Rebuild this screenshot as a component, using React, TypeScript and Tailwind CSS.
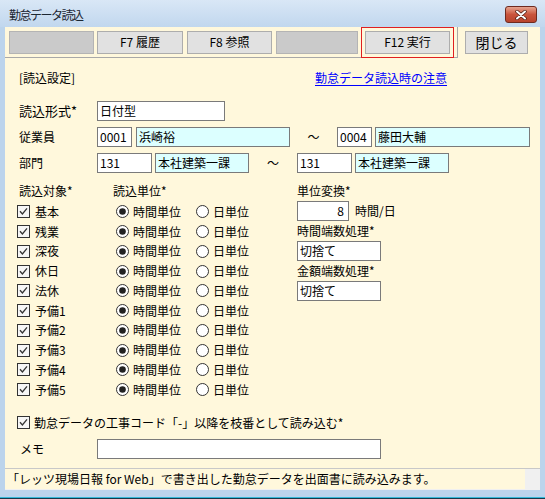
import React from "react";

const rows = ["基本", "残業", "深夜", "休日", "法休", "予備1", "予備2", "予備3", "予備4", "予備5"];

function Check() {
  return (
    <svg width="13" height="13" viewBox="0 0 13 13" className="shrink-0">
      <rect x="0.5" y="0.5" width="12" height="12" fill="#f6f6f6" stroke="#333333" />
      <path d="M3 6.3 L5.4 8.9 L10 3.4" fill="none" stroke="#333333" strokeWidth="1.3" />
    </svg>
  );
}

function Radio({ on }: { on?: boolean }) {
  return (
    <svg width="13" height="13" viewBox="0 0 13 13" className="shrink-0">
      <circle cx="6.5" cy="6.5" r="6" fill="#ffffff" stroke="#333333" />
      {on && <circle cx="6.5" cy="6.5" r="3.3" fill="#222222" />}
    </svg>
  );
}

function Field({ w, value, cyan, right }: { w: string; value?: string; cyan?: boolean; right?: boolean }) {
  return (
    <div
      className={`${w} h-[20px] shrink-0 border border-[#7a7a7a] px-[2px] flex items-center leading-none ${
        cyan ? "bg-[#dcffff]" : "bg-white"
      } ${right ? "justify-end pr-[4px]" : ""}`}
    >
      {value}
    </div>
  );
}

export default function App() {
  return (
    <div className="w-[545px] h-[499px] overflow-hidden flex flex-col bg-[#bcd4ec] text-[12px] text-black font-['Noto_Sans_CJK_JP',sans-serif]">
      {/* title bar */}
      <div className="h-[27px] shrink-0 flex items-start justify-between pl-[9px] pr-[8px] bg-gradient-to-b from-[#d9e7f6] to-[#c1d7ee]">
        <span className="mt-[7px] leading-[16px] tracking-[-1.5px] text-[#1b2632]">勤怠データ読込</span>
        <div className="mt-[6px] w-[32px] h-[17px] rounded-[3px] border border-[#6e2a1f] bg-gradient-to-b from-[#e6a48f] via-[#c9543c] to-[#b8442d] flex items-center justify-center">
          <svg width="12" height="10" viewBox="0 0 12 10">
            <path d="M2 1.5 L10 8.5 M10 1.5 L2 8.5" stroke="#4a1b12" strokeWidth="3.4" strokeLinecap="round" />
            <path d="M2 1.5 L10 8.5 M10 1.5 L2 8.5" stroke="#ffffff" strokeWidth="2" strokeLinecap="round" />
          </svg>
        </div>
      </div>

      {/* content */}
      <div className="flex-1 mx-[5px] flex flex-col bg-[#fff8dc]">
        {/* toolbar */}
        <div className="h-[31px] shrink-0 flex">
          <div className="w-[453px] h-[31px] border-r border-b border-[#a8a8a8] flex items-center pl-[4px]">
            <div className="w-[85px] h-[23px] bg-[#cacaca] border border-[#b4b4b4]" />
            <button className="ml-[3px] w-[86px] h-[23px] bg-[#e1e1e1] border border-[#adadad] leading-none">F7 履歴</button>
            <button className="ml-[4px] w-[85px] h-[23px] bg-[#e1e1e1] border border-[#adadad] leading-none">F8 参照</button>
            <div className="ml-[4px] w-[82px] h-[23px] bg-[#cacaca] border border-[#b4b4b4]" />
            <div className="ml-[3px] w-[93px] h-[31px] border border-[#e02020] flex items-center justify-center">
              <button className="w-[85px] h-[23px] bg-[#e1e1e1] border border-[#adadad] leading-none">F12 実行</button>
            </div>
          </div>
          <div className="flex items-center h-[30px]">
            <button className="ml-[7px] w-[63px] h-[23px] bg-[#e1e1e1] border border-[#adadad] text-[14px] leading-none">閉じる</button>
          </div>
        </div>

        {/* body */}
        <div className="flex-1 flex flex-col pl-[14px]">
          <div className="mt-[10px] h-[20px] flex items-center">
            <span className="w-[296px]">[読込設定]</span>
            <span className="text-[#0000ff] underline underline-offset-2">勤怠データ読込時の注意</span>
          </div>

          <div className="mt-[13px] h-[20px] flex items-center">
            <span className="w-[78px] text-[13px]">読込形式*</span>
            <Field w="w-[128px]" value="日付型" />
          </div>

          <div className="mt-[6px] h-[20px] flex items-center">
            <span className="w-[78px]">従業員</span>
            <Field w="w-[35px]" value="0001" />
            <div className="ml-[4px]">
              <Field w="w-[154px]" value="浜崎裕" cyan />
            </div>
            <span className="w-[47px] text-center">～</span>
            <Field w="w-[35px]" value="0004" />
            <div className="ml-[3px]">
              <Field w="w-[155px]" value="藤田大輔" cyan />
            </div>
          </div>

          <div className="mt-[6px] h-[20px] flex items-center">
            <span className="w-[78px]">部門</span>
            <Field w="w-[55px]" value="131" />
            <div className="ml-[3px]">
              <Field w="w-[94px]" value="本社建築一課" cyan />
            </div>
            <span className="w-[48px] text-center">～</span>
            <Field w="w-[55px]" value="131" />
            <div className="ml-[3px]">
              <Field w="w-[94px]" value="本社建築一課" cyan />
            </div>
          </div>

          <div className="mt-[8px] flex">
            <div className="w-[278px] flex flex-col">
              <div className="h-[20px] flex items-center">
                <span className="w-[94px]">読込対象*</span>
                <span>読込単位*</span>
              </div>
              <div className="mt-[1px] flex flex-col">
                {rows.map((r) => (
                  <div key={r} className="h-[19.75px] flex items-center">
                    <div className="w-[94px] -ml-[2px] flex items-center gap-[5px]">
                      <Check />
                      <span>{r}</span>
                    </div>
                    <div className="w-[85px] pl-[5px] flex items-center gap-[4px]">
                      <Radio on />
                      <span>時間単位</span>
                    </div>
                    <div className="flex items-center gap-[4px]">
                      <Radio />
                      <span>日単位</span>
                    </div>
                  </div>
                ))}
              </div>
            </div>

            <div className="flex flex-col">
              <div className="h-[20px] flex items-center">単位変換*</div>
              <div className="h-[20px] flex items-center">
                <Field w="w-[52px]" value="8" right />
                <span className="ml-[6px]">時間/日</span>
              </div>
              <div className="h-[20px] flex items-center">時間端数処理*</div>
              <Field w="w-[84px]" value="切捨て" />
              <div className="h-[20px] flex items-center">金額端数処理*</div>
              <Field w="w-[84px]" value="切捨て" />
            </div>
          </div>

          <div className="mt-[13px] h-[20px] flex items-center -ml-[2px] gap-[4px]">
            <Check />
            <span>勤怠データの工事コード「-」以降を枝番として読み込む*</span>
          </div>

          <div className="mt-[6px] h-[20px] flex items-center">
            <span className="w-[78px] pl-[1px]">メモ</span>
            <Field w="w-[284px]" />
          </div>
        </div>

        {/* status bar */}
        <div className="h-[22px] shrink-0 border-t border-[#c8c8c8] bg-[#f0f0f0] flex items-start">
          <div className="w-[520px] h-[20px] bg-[#fff8dc] pl-[2px] flex items-center leading-none">
            「レッツ現場日報 for Web」で書き出した勤怠データを出面書に読み込みます。
          </div>
        </div>
      </div>

      <div className="h-[7px] shrink-0" />
      <div className="h-[2px] shrink-0 border-t border-[#36b8d8] bg-[#17394a]" />
    </div>
  );
}
